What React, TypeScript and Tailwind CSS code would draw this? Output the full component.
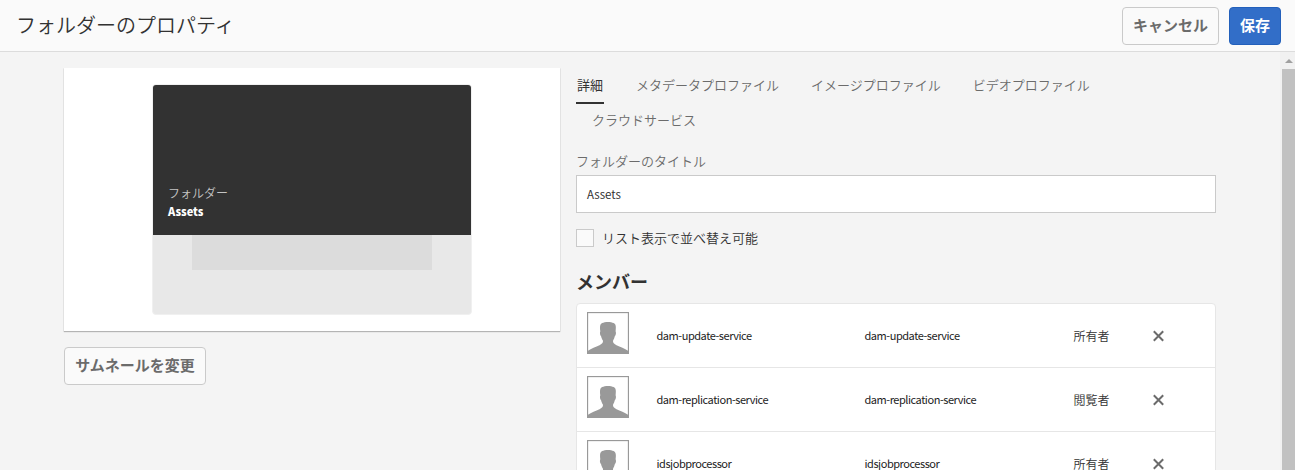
import React from "react";

type Member = { name: string; id: string; role: string };

const members: Member[] = [
  { name: "dam-update-service", id: "dam-update-service", role: "所有者" },
  { name: "dam-replication-service", id: "dam-replication-service", role: "閲覧者" },
  { name: "idsjobprocessor", id: "idsjobprocessor", role: "所有者" },
];

const profileTabs = ["メタデータプロファイル", "イメージプロファイル", "ビデオプロファイル"];

function Avatar() {
  return (
    <svg width="42" height="42" viewBox="0 0 42 42" className="block shrink-0">
      <rect x="0.5" y="0.5" width="41" height="41" fill="#fff" stroke="#999" strokeWidth="1.3" />
      <path
        d="M1 41.5V38.8C4 36.500 9 35 12.500 33.200C15.500 31.700 16.300 30.500 15.900 28.500C14.900 27 14.300 25.300 14.100 24.200C12.900 23 12.600 20.500 13.300 19.200C12.700 14.500 13 12 15.200 11C17.800 9.500 24 9.500 26.600 11C28.900 12 29.200 14.500 28.600 19.200C29.300 20.500 29 23 27.800 24.200C27.600 25.500 27 27 26.100 28.500C25.700 30.500 26.500 31.700 29.500 33.200C33 35 38 36.500 41 38.800V41.5Z"
        fill="#999"
      />
    </svg>
  );
}

function RemoveIcon() {
  return (
    <svg width="12" height="12" viewBox="0 0 12 12" className="block">
      <path d="M1.800 1.300L11.200 10.700M11.200 1.300L1.800 10.700" stroke="#6b6b6b" strokeWidth="2" />
    </svg>
  );
}

function MemberRow({ member }: { member: Member }) {
  return (
    <div className="flex h-16 shrink-0 items-center border-b border-[#e6e6e6] pl-[10px] text-[#323232]">
      <div className="w-[69.500px] pb-[5px]">
        <Avatar />
      </div>
      <div className="w-[208px] pb-0.5 text-[11px] leading-4 tracking-[-0.46px] text-[#222]">{member.name}</div>
      <div className="w-[209px] pb-0.5 text-[11px] leading-4 tracking-[-0.46px] text-[#222]">{member.id}</div>
      <div className="w-[78.500px] text-xs leading-4 font-[350]">{member.role}</div>
      <RemoveIcon />
    </div>
  );
}

export default function App() {
  return (
    <div className="flex h-[470px] w-full flex-col overflow-hidden bg-[#f4f4f4] font-['Noto_Sans_CJK_JP',sans-serif] text-[#323232]">
      <header className="flex h-[52px] shrink-0 items-center gap-[10px] border-b border-[#dcdcdc] bg-[#fafafa] pr-[14px] pl-4">
        <h1 className="flex-1 pb-0.5 text-[20px] leading-6 font-[350]">フォルダーのプロパティ</h1>
        <button className="h-[38px] w-[97px] rounded border border-[#cacaca] bg-[#fafafa] pb-0.5 text-[15px] leading-5 font-bold text-[#6b6b6b]">
          キャンセル
        </button>
        <button className="h-[38px] w-[52px] rounded border border-[#2360bb] bg-[#326ec8] pb-0.5 text-[15px] leading-5 font-bold text-white">
          保存
        </button>
      </header>

      <div className="flex min-h-0 flex-1">
        <aside className="ml-16 flex w-[496px] shrink-0 flex-col items-start pt-4">
          <div className="flex h-[263px] w-full shrink-0 justify-center bg-white pt-4 shadow-[0_1px_1px_#b4b4b4,0_0_0_1px_#ececec] [clip-path:inset(0_-1px_-2px_-1px)]">
            <div className="mr-px flex h-[231px] w-80 flex-col overflow-hidden rounded border border-[#f0f0f0] bg-[#e8e8e8]">
              <div className="flex h-[150px] shrink-0 flex-col justify-end bg-[#323232] pb-[15px] pl-[15.500px]">
                <span className="text-xs leading-5 font-[350] text-[#c4c4c4]">フォルダー</span>
                <span className="text-[11px] leading-[17px] font-black text-white">Assets</span>
              </div>
              <div className="mx-[39px] h-[35px] bg-[#dcdcdc]" />
            </div>
          </div>
          <button className="mt-4 h-[38px] w-[142px] rounded border border-[#cacaca] bg-[#fafafa] pb-0.5 text-[15px] leading-5 font-bold text-[#6b6b6b]">
            サムネールを変更
          </button>
        </aside>

        <main className="ml-4 flex w-[640px] shrink-0 flex-col">
          <nav className="mt-4 flex h-9 shrink-0 gap-8 text-[13px] leading-[34px] font-[350] text-[#6b6b6b]">
            <span className="w-7 border-b-2 border-[#323232] pl-px font-normal text-[#323232]">詳細</span>
            {profileTabs.map((tab) => (
              <span key={tab}>{tab}</span>
            ))}
          </nav>
          <div className="h-8 shrink-0 pl-4 text-[13px] leading-8 font-[350] text-[#6b6b6b]">クラウドサービス</div>

          <div className="mt-[15px] h-6 shrink-0 text-[13px] leading-5 font-[350] text-[#6b6b6b]">
            フォルダーのタイトル
          </div>
          <div className="flex h-[38px] shrink-0 items-center border border-[#cacaca] bg-white px-[10px] pt-0.5 text-[11.500px]">
            Assets
          </div>
          <label className="mt-4 flex h-[18px] shrink-0 items-center gap-2 text-[13px] leading-[18px] font-[350]">
            <span className="size-[18px] border border-[#cacaca] bg-[#fafafa]" />
            リスト表示で並べ替え可能
          </label>
          <h2 className="mt-[22px] h-[34px] shrink-0 text-[18px] leading-6 font-bold">メンバー</h2>

          <section className="flex shrink-0 flex-col rounded-t border border-[#e6e6e6] bg-white">
            {members.map((member) => (
              <MemberRow key={member.id} member={member} />
            ))}
          </section>
        </main>

        <div className="ml-16 flex w-[15px] shrink-0 flex-col items-end bg-[#f1f1f1]">
          <div className="flex h-[17px] w-[13px] items-center justify-center">
            <svg width="8" height="4" viewBox="0 0 8 4">
              <path d="M0 4L4 0L8 4Z" fill="#a0a0a0" />
            </svg>
          </div>
          <div className="w-[13px] flex-1 bg-[#c1c1c1]" />
        </div>
      </div>
    </div>
  );
}
